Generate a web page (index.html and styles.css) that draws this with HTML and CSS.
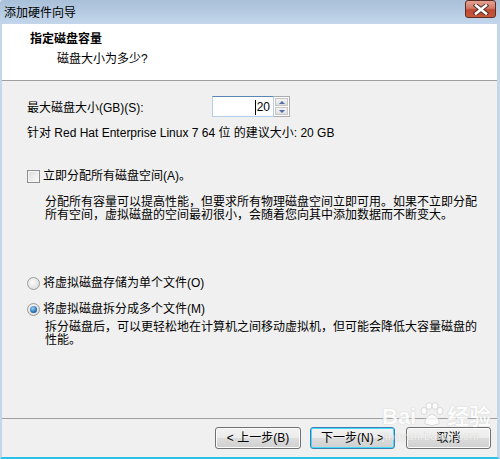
FILE: index.html
```html
<!DOCTYPE html>
<html lang="zh-CN">
<head>
    <meta charset="UTF-8">
    <title>添加硬件向导</title>
<link rel="stylesheet" href="styles.css">
</head>
<body>
    <div class="window">
        <div class="titlebar">
            <span class="title">添加硬件向导</span>
            <div class="close-btn">
                <svg width="16" height="11" viewBox="0 0 16 11">
                    <path d="M3 1.5 L13 9.5 M13 1.5 L3 9.5" stroke="#4a2a26" stroke-width="4.4" stroke-linecap="square"/>
                    <path d="M3 1.5 L13 9.5 M13 1.5 L3 9.5" stroke="#fff" stroke-width="2.6" stroke-linecap="square"/>
                </svg>
            </div>
        </div>

        <div class="frame">
            <div class="header">
                <h1>指定磁盘容量</h1>
                <p>磁盘大小为多少?</p>
            </div>

            <div class="content">
                <div class="size-row">
                    <label class="size-label">最大磁盘大小(GB)(S):</label>
                    <div class="spin">
                        <div class="spin-input"><span class="caret"></span>20</div>
                        <div class="spin-btns">
                            <div class="spin-btn"><span class="arrow-up"></span></div>
                            <div class="spin-btn"><span class="arrow-down"></span></div>
                        </div>
                    </div>
                </div>
                <div class="hint">针对 Red Hat Enterprise Linux 7 64 位 的建议大小: 20 GB</div>

                <div class="option check-row">
                    <span class="checkbox"></span>
                    <span>立即分配所有磁盘空间(A)。</span>
                </div>
                <p class="desc desc-alloc">分配所有容量可以提高性能，但要求所有物理磁盘空间立即可用。如果不立即分配<br>所有空间，虚拟磁盘的空间最初很小，会随着您向其中添加数据而不断变大。</p>

                <div class="option radio-single">
                    <span class="radio"></span>
                    <span>将虚拟磁盘存储为单个文件(O)</span>
                </div>
                <div class="option radio-multi">
                    <span class="radio checked"></span>
                    <span>将虚拟磁盘拆分成多个文件(M)</span>
                </div>
                <p class="desc desc-split">拆分磁盘后，可以更轻松地在计算机之间移动虚拟机，但可能会降低大容量磁盘的<br>性能。</p>
            </div>

            <div class="footer">
                <button class="btn">&lt; 上一步(B)</button>
                <button class="btn btn-default">下一步(N) &gt;</button>
                <button class="btn btn-cancel">取消</button>
            </div>
        </div>

        <div class="watermark">
            <div class="wm-top">Bai<svg class="paw" width="26" height="26" viewBox="0 0 26 26">
                    <ellipse cx="6" cy="9" rx="3" ry="3.6" fill="#fff" stroke="#d4d4d4"/>
                    <ellipse cx="11" cy="4" rx="3" ry="3.4" fill="#fff" stroke="#d4d4d4"/>
                    <ellipse cx="17" cy="4" rx="3" ry="3.4" fill="#fff" stroke="#d4d4d4"/>
                    <ellipse cx="22" cy="9" rx="3" ry="3.6" fill="#fff" stroke="#d4d4d4"/>
                    <path d="M7 22 Q6 15 14 12 Q22 15 21 22 Q14 25 7 22 Z" fill="#fff" stroke="#d4d4d4"/>
                </svg>经验</div>
            <div class="wm-url">jingyan.baidu.com</div>
        </div>
    </div>
</body>
</html>
```

FILE: styles.css
```css
*{
    margin: 0;
    padding: 0;
    box-sizing: border-box;
}
body{
    width: 500px;
    height: 459px;
    overflow: hidden;
    font-family: "Liberation Sans", "Noto Sans CJK SC", sans-serif;
    font-size: 12px;
    color: #000;
    background: #f0f0f0;
}
.window{
    width: 500px;
    height: 459px;
    position: relative;
    display: flex;
    flex-direction: column;
}

/* title bar */
.titlebar{
    height: 24px;
    display: flex;
    align-items: center;
    justify-content: space-between;
    padding: 0 4px 0 4px;
    background: linear-gradient(#a9c0d9, #c3d6eb);
    border-top-left-radius: 3px;
}
.title{
    line-height: 16px;
    padding-top: 1px;
}
.close-btn{
    width: 31px;
    height: 18px;
    margin-top: -6px;
    border: 1px solid #5e2a24;
    border-radius: 3px;
    background: linear-gradient(#e3a191 0%, #d27a66 45%, #bd4a33 55%, #c6583c 100%);
    display: flex;
    align-items: center;
    justify-content: center;
}

/* frame below the title */
.frame{
    flex: 1;
    display: flex;
    flex-direction: column;
    border-left: 2px solid #c4d6ea;
    border-right: 3px solid #c4d6ea;
    border-bottom: 2px solid #29c1ea;
}
.header{
    height: 57px;
    background: #fff;
    border-bottom: 1px solid #a0a0a0;
    padding: 7px 0 0 28px;
}
.header h1{
    font-size: 12px;
    font-weight: bold;
    line-height: 16px;
}
.header p{
    line-height: 16px;
    margin: 4px 0 0 27px;
}

.content{
    height: 337px;
    padding: 15px 0 0 25px;
}
.size-row{
    display: flex;
    align-items: center;
    height: 21px;
}
.size-label{
    width: 185px;
    line-height: 16px;
    padding-top: 3px;
}
.spin{
    display: flex;
    height: 21px;
}
.spin-input{
    width: 62px;
    height: 21px;
    background: #fff;
    border: 1px solid #b6cee6;
    border-top-color: #5c85b6;
    text-align: right;
    padding: 2px 3px 0 0;
    line-height: 16px;
    position: relative;
}
.caret{
    position: absolute;
    right: 17px;
    top: 3px;
    height: 15px;
    border-left: 1px solid #000;
}
.spin-btns{
    width: 16px;
    display: flex;
    flex-direction: column;
    border: 1px solid #acacac;
    border-left: none;
    background: #fff;
    padding: 1px;
    gap: 1px;
}
.spin-btn{
    flex: 1;
    background: linear-gradient(#f3f3f3, #dedede);
    border: 1px solid #c6c6c6;
    display: flex;
    align-items: center;
    justify-content: center;
}
.arrow-up{
    border-left: 3px solid transparent;
    border-right: 3px solid transparent;
    border-bottom: 3px solid #4e6fa8;
}
.arrow-down{
    border-left: 3px solid transparent;
    border-right: 3px solid transparent;
    border-top: 3px solid #4e6fa8;
}
.hint{
    line-height: 16px;
    margin-top: 8px;
}

.option{
    display: flex;
    align-items: center;
    line-height: 16px;
}
.check-row{
    margin-top: 27px;
}
.checkbox{
    width: 13px;
    height: 13px;
    margin-right: 3px;
    border: 1px solid #8f8f8f;
    background: linear-gradient(135deg, #dcdcdc, #fbfbfb);
    box-shadow: inset 0 0 0 1px #f4f4f4;
}
.radio{
    width: 13px;
    height: 13px;
    margin-right: 3px;
    border-radius: 50%;
    border: 1px solid #9a9a9a;
    background: radial-gradient(circle at 40% 40%, #fafafa, #d6d6d6);
    position: relative;
}
.radio.checked::after{
    content: "";
    position: absolute;
    left: 2px;
    top: 2px;
    width: 7px;
    height: 7px;
    border-radius: 50%;
    background: radial-gradient(circle at 40% 35%, #9ad4f7, #1c5fa6 70%, #0d3f7e);
}
.desc{
    margin-left: 18px;
    line-height: 13px;
}
.desc-alloc{
    margin-top: 12px;
}
.radio-single{
    margin-top: 53px;
}
.radio-multi{
    margin-top: 10px;
}
.desc-split{
    margin-top: 4px;
}

/* buttons */
.footer{
    height: 39px;
    border-top: 1px solid #a0a0a0;
    display: flex;
    justify-content: flex-end;
    padding: 8px 6px 0 0;
    gap: 9px;
}
.btn{
    width: 86px;
    height: 22px;
    font-family: "Liberation Sans", "Noto Sans CJK SC", sans-serif;
    font-size: 12px;
    line-height: 16px;
    color: #000;
    border: 1px solid #707070;
    border-radius: 3px;
    background: linear-gradient(#f2f2f2 0%, #ebebeb 50%, #dddddd 51%, #cfcfcf 100%);
    box-shadow: inset 0 0 0 1px #fcfcfc;
}
.btn-default{
    width: 85px;
    border-color: #3c7fb1;
    box-shadow: inset 0 0 0 1px #48d8fb;
}
.btn-cancel{
    width: 85px;
    margin-left: 2px;
}

/* watermark over the bottom corner */
.watermark{
    position: absolute;
    left: 382px;
    top: 402px;
    color: #fff;
    text-shadow: 0 0 1px #c8c8c8, 0 0 1px #c8c8c8;
    opacity: 0.8;
    pointer-events: none;
}
.wm-top{
    display: flex;
    align-items: flex-end;
    font-size: 22px;
    line-height: 28px;
    font-weight: bold;
}
.wm-top .paw{
    margin: 0 3px 3px 2px;
}
.wm-url{
    font-size: 11px;
    line-height: 11px;
    letter-spacing: 0.5px;
    color: #fafafa;
    text-shadow: 0 0 1px #b0b0b0;
}
```
